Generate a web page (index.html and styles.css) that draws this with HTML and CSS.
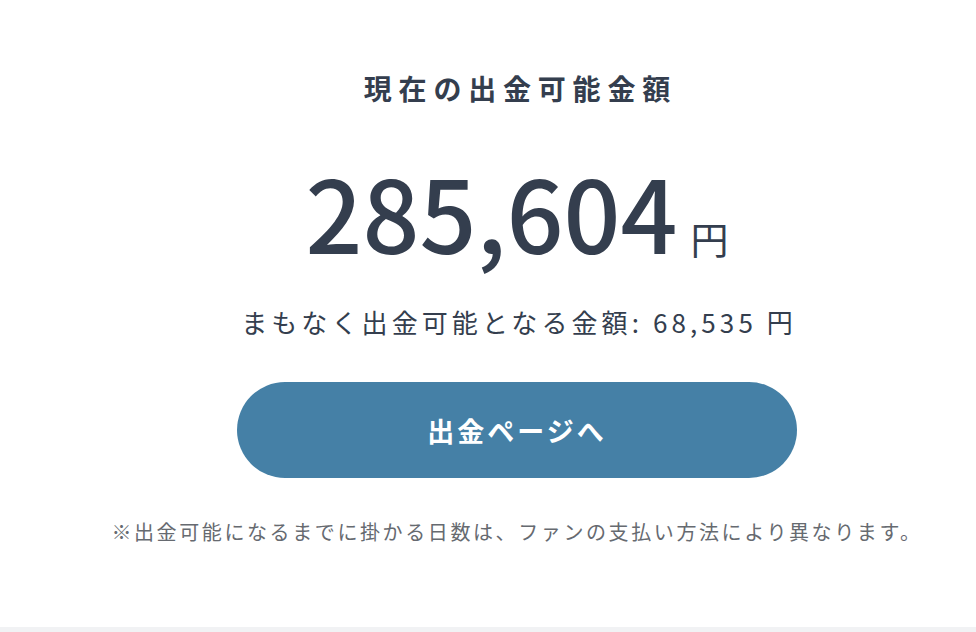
FILE: index.html
```html
<!DOCTYPE html>
<html lang="ja">
<head>
<meta charset="utf-8">
<title>出金可能金額</title>
<link rel="stylesheet" href="styles.css">
</head>
<body>
<main class="panel">
  <h1 class="title">現在の出金可能金額</h1>
  <div class="amount"><span class="amount-num">285,604</span><span class="amount-unit">円</span></div>
  <p class="pending">まもなく出金可能となる金額: 68,535 円</p>
  <a class="btn" href="#">出金ページへ</a>
  <p class="note">※出金可能になるまでに掛かる日数は、ファンの支払い方法により異なります。</p>
</main>
<div class="footer-strip"></div>
</body>
</html>
```

FILE: styles.css
```css
html, body {
  margin: 0;
  padding: 0;
}
body {
  background: #f1f2f4;
  font-family: "Noto Sans CJK JP", "Noto Sans", sans-serif;
  color: #343e4e;
}
.panel {
  background: #ffffff;
  height: 627px;
  box-sizing: border-box;
  padding-top: 74px;
  padding-left: 58px;
  display: flex;
  flex-direction: column;
  align-items: center;
}
.title {
  margin: 0;
  font-size: 28px;
  line-height: 28px;
  font-weight: 700;
  letter-spacing: 6.8px;
  margin-right: -6.8px;
}
.amount {
  margin-top: 59px;
  display: flex;
  align-items: baseline;
  line-height: 100px;
  height: 100px;
}
.amount-num {
  font-size: 100px;
  font-weight: 500;
  line-height: 100px;
}
.amount-unit {
  font-size: 38px;
  font-weight: 400;
  margin-left: 13px;
}
.pending {
  margin: 48px 0 0;
  font-size: 26px;
  line-height: 26px;
  letter-spacing: 4.1px;
  margin-right: -4.1px;
}
.btn {
  margin-top: 47px;
  width: 560px;
  height: 96px;
  border-radius: 48px;
  background: #4580a6;
  color: #ffffff;
  text-decoration: none;
  display: flex;
  align-items: center;
  justify-content: center;
  font-size: 27px;
  font-weight: 700;
  letter-spacing: 3px;
}
.note {
  margin: 44px 0 0;
  font-size: 20px;
  line-height: 20px;
  color: #666a70;
  letter-spacing: 2.6px;
}
.footer-strip {
  height: 5px;
}
```
